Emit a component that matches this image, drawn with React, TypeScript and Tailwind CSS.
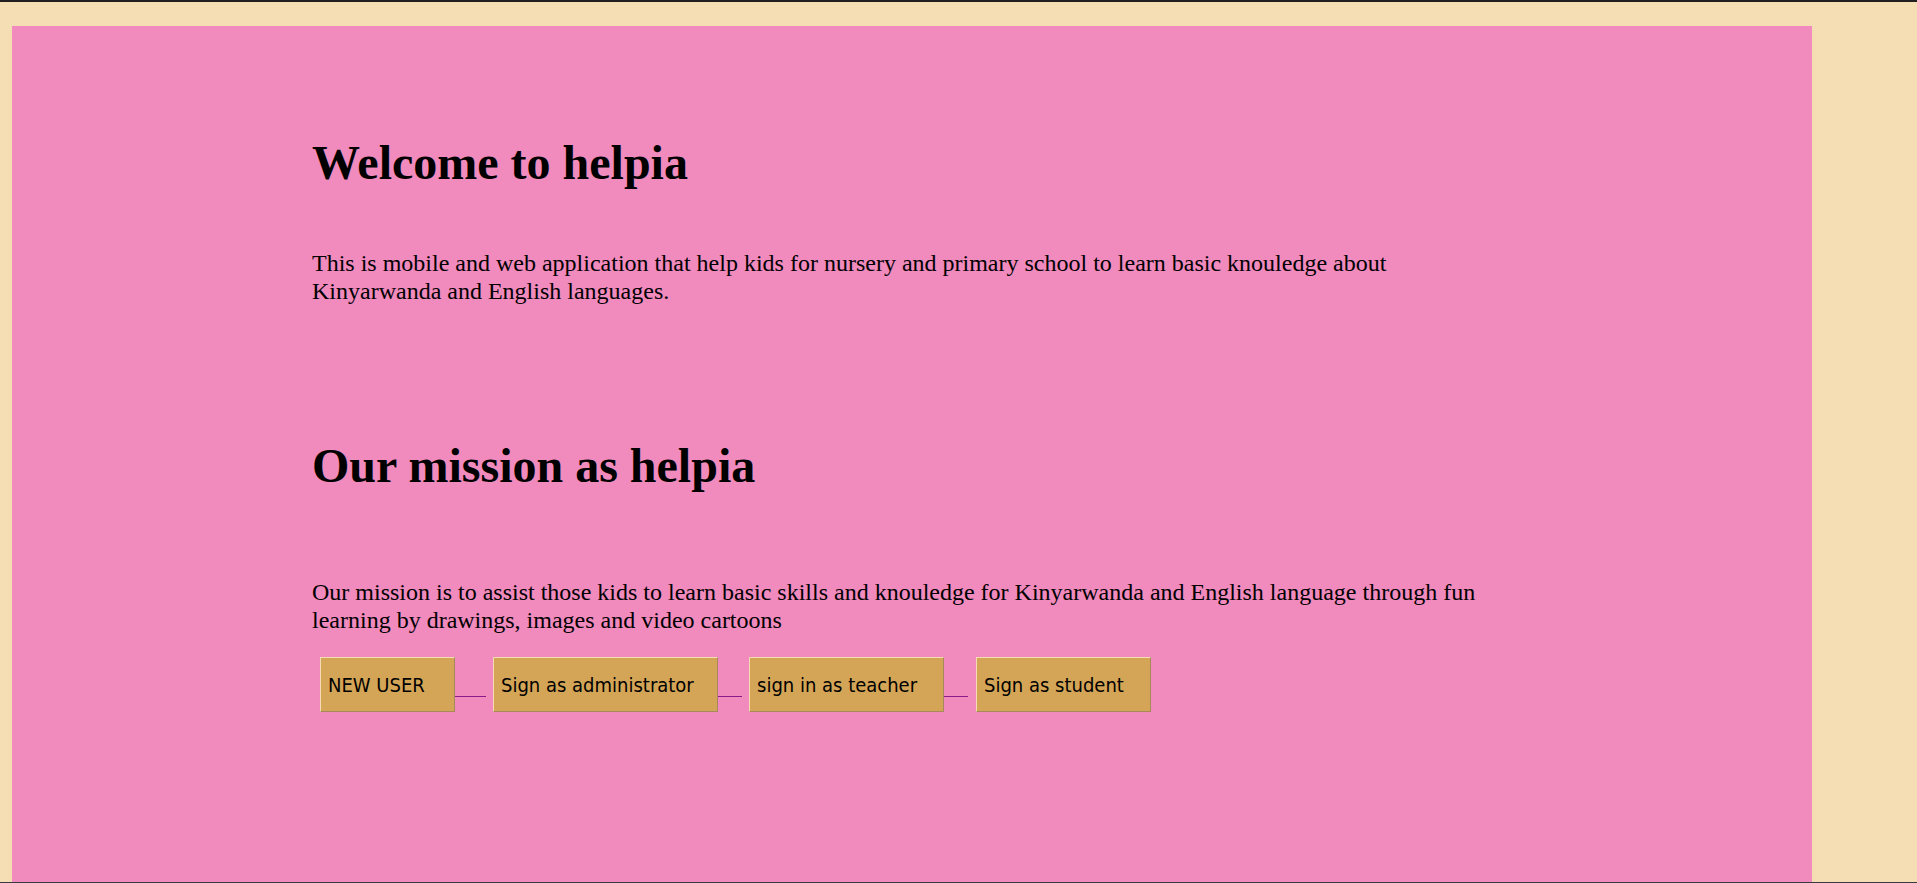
import React from "react";

function Btn({ label, w }: { label: string; w: string }) {
  return (
    <button
      className={`${w} h-[55px] shrink-0 bg-[#d4a556] border border-t-[#f3dcb4] border-l-[#f3dcb4] border-r-[#a8895c] border-b-[#a8895c] text-left pl-[7px] text-[20px] text-black`}
      style={{ fontFamily: '"DejaVu Sans Condensed", "DejaVu Sans", Tahoma, sans-serif' }}
    >
      {label}
    </button>
  );
}

function Link({ w }: { w: string }) {
  return <div className={`${w} h-[1px] bg-[#8a1c8a] self-start mt-[39px] shrink-0`} />;
}

export default function App() {
  return (
    <div className="w-[1917px] h-[883px] flex flex-col overflow-hidden bg-[#f5deb3]">
      <div className="h-[2px] bg-[#1f1f1f] shrink-0" />
      <div className="flex-1 overflow-hidden pt-[24px] pl-[12px]">
        <div
          className="w-[1800px] h-[1000px] bg-[#f18abd] pt-[109px] text-black"
          style={{ fontFamily: '"Liberation Serif", "Times New Roman", serif' }}
        >
          <div className="w-[1200px] mx-auto">
            <h1 className="text-[48px] font-bold leading-[55px] m-0">Welcome to helpia</h1>
            <p className="text-[24px] leading-[28px] mt-[59px]">
              This is mobile and web application that help kids for nursery and primary school to learn basic knouledge about Kinyarwanda and English languages.
            </p>
            <h1 className="text-[48px] font-bold leading-[55px] mt-[133px]">Our mission as helpia</h1>
            <p className="text-[24px] leading-[28px] mt-[85px]">
              Our mission is to assist those kids to learn basic skills and knouledge for Kinyarwanda and English language through fun learning by drawings, images and video cartoons
            </p>
            <div className="flex mt-[23px] pl-[8px]">
              <Btn label="NEW USER" w="w-[135px]" />
              <Link w="w-[31px]" />
              <div className="w-[7px] shrink-0" />
              <Btn label="Sign as administrator" w="w-[225px]" />
              <Link w="w-[24px]" />
              <div className="w-[7px] shrink-0" />
              <Btn label="sign in as teacher" w="w-[195px]" />
              <Link w="w-[24px]" />
              <div className="w-[8px] shrink-0" />
              <Btn label="Sign as student" w="w-[175px]" />
            </div>
          </div>
        </div>
      </div>
      <div className="h-[1px] bg-[#3a3a44] shrink-0" />
    </div>
  );
}
